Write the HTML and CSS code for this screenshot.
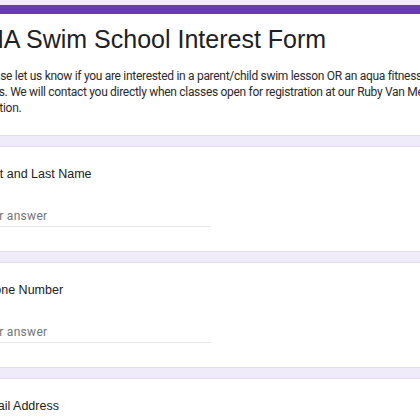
FILE: index.html
```html
<!DOCTYPE html>
<html>
<head>
<meta charset="utf-8">
<link rel="stylesheet" href="styles.css">
</head>
<body>
<div class="form">
  <div class="card header">
    <h1 class="title">MA Swim School Interest Form</h1>
    <p class="desc">Please let us know if you are interested in a parent/child swim lesson OR an aqua fitness class. We will contact you directly when classes open for registration at our Ruby Van Meter location.</p>
  </div>
  <div class="card question">
    <div class="label">First and Last Name</div>
    <div class="input">Your answer</div>
  </div>
  <div class="card question">
    <div class="label">Phone Number</div>
    <div class="input">Your answer</div>
  </div>
  <div class="card question">
    <div class="label">Email Address</div>
    <div class="input">Your answer</div>
  </div>
</div>
</body>
</html>
```
FILE: styles.css
```css
html, body {
  margin: 0;
  padding: 0;
  background: #f0ebf8;
  overflow: hidden;
  height: 420px;
}
.form {
  margin-left: -48px;
  width: 520px;
  padding-top: 5px;
  display: flex;
  flex-direction: column;
  gap: 10px;
}
.card {
  background: #fff;
  border: 1px solid #e2dcec;
  border-radius: 8px;
  padding: 0 24px;
}
.header {
  border-top: 9px solid #673ab7;
  padding-top: 9px;
  padding-bottom: 19px;
}
.title {
  margin: 0 0 0 6px;
  font-family: "Liberation Sans", Arial, sans-serif;
  font-weight: 400;
  font-size: 25px;
  line-height: 32px;
  color: #202124;
}
.desc {
  margin: 13px 0 0 1px;
  font-family: Roboto, "Liberation Sans", sans-serif;
  font-size: 12px;
  line-height: 16px;
  letter-spacing: -0.3px;
  color: #2a2a2e;
  width: 466px;
}
.question {
  padding-top: 19px;
  padding-bottom: 24px;
}
.label {
  margin-left: 2px;
  font-family: "Liberation Sans", Arial, sans-serif;
  font-size: 12.5px;
  line-height: 16px;
  color: #202124;
}
.input {
  margin: 26px 0 0 1px;
  width: 233px;
  padding-bottom: 2px;
  border-bottom: 1px solid #e6e6e6;
  font-family: Roboto, "Liberation Sans", sans-serif;
  font-size: 12px;
  line-height: 16px;
  letter-spacing: 0.3px;
  color: #70757a;
}
```
